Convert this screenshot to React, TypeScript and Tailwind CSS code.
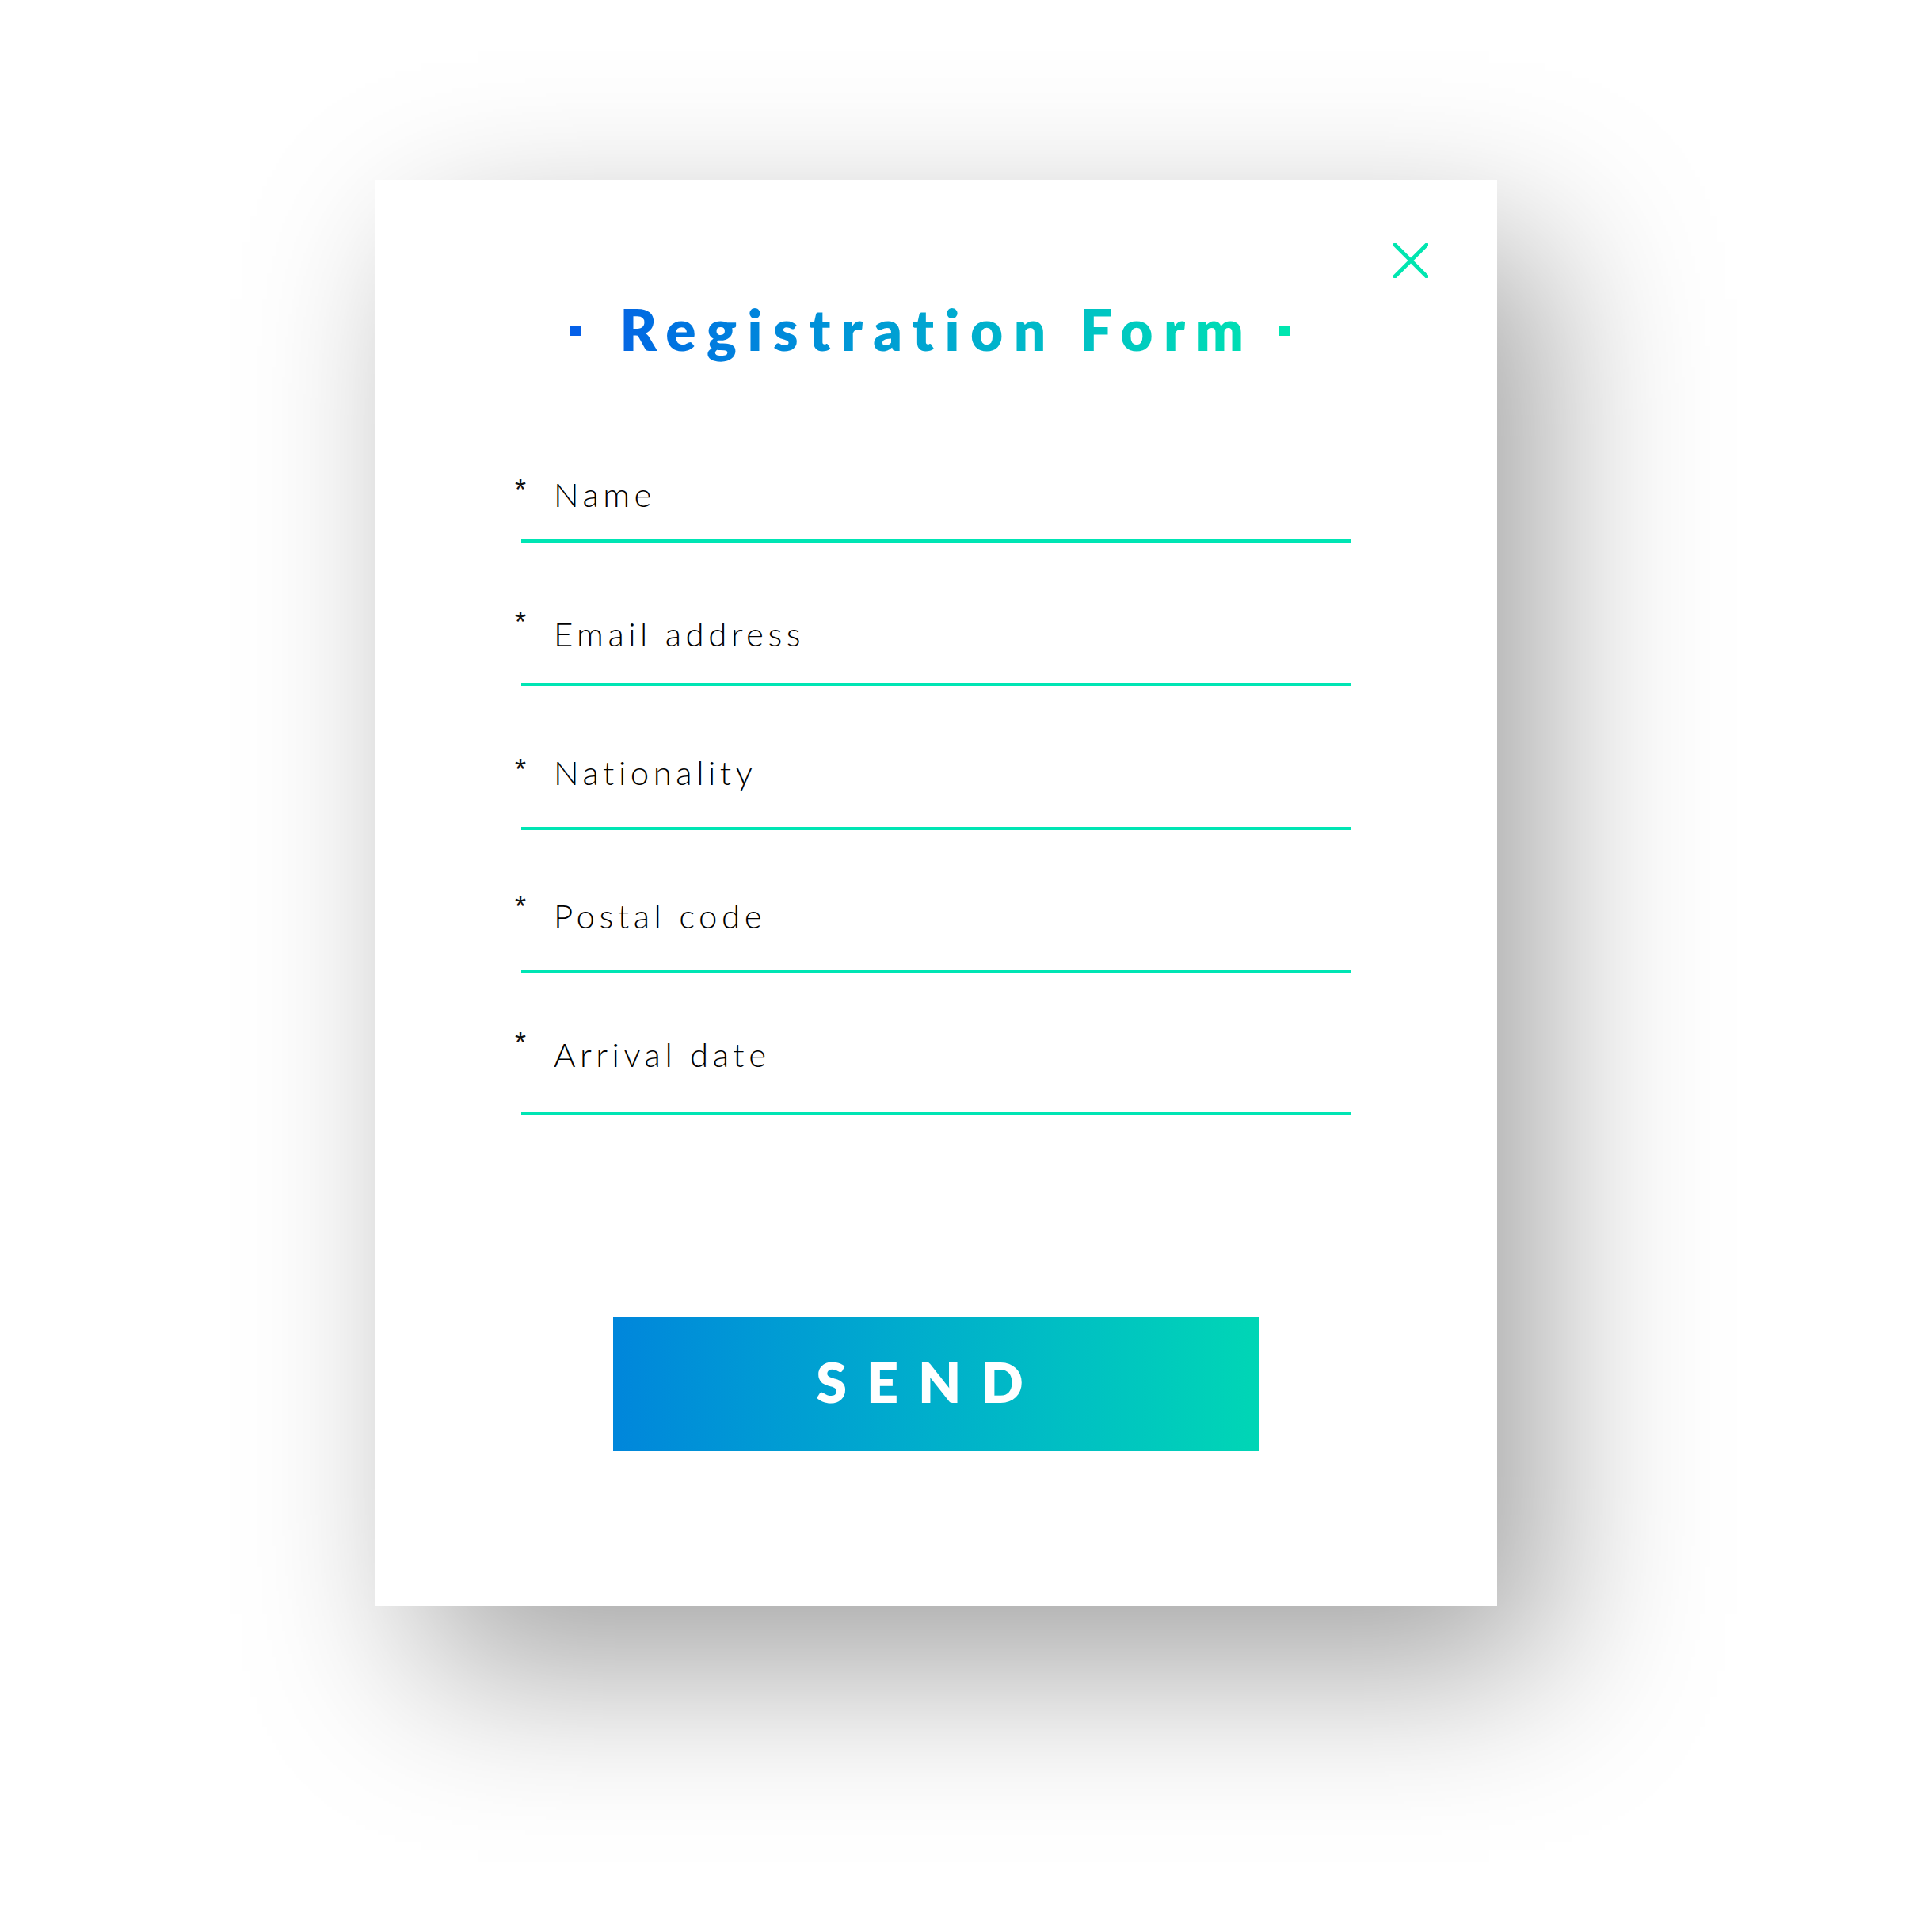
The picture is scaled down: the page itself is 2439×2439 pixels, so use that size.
import React from 'react';

const fields = [
  { label: 'Name', ast: '-mt-[2px]', gap: 'mt-[36px]', top: 'mt-[136px]' },
  { label: 'Email address', ast: '-mt-[11px]', gap: 'mt-[41px]', top: 'mt-[94px]' },
  { label: 'Nationality', ast: 'mt-[0px]', gap: 'mt-[48px]', top: 'mt-[88px]' },
  { label: 'Postal code', ast: '-mt-[8px]', gap: 'mt-[47px]', top: 'mt-[87px]' },
  { label: 'Arrival date', ast: '-mt-[11px]', gap: 'mt-[52px]', top: 'mt-[82px]' },
];

export default function App() {
  return (
    <div className="min-h-[2439px] w-full bg-white pl-[473px] pt-[227px] font-['Lato',sans-serif]">
      <div className="relative flex h-[1801px] w-[1417px] flex-col bg-white shadow-[60px_80px_200px_rgba(0,0,0,0.36)]">
        {/* close */}
        <button className="absolute right-[87px] top-[80px] h-[44px] w-[44px]">
          <svg viewBox="0 0 44 44" className="h-[44px] w-[44px]">
            <path d="M2 2 L42 42 M42 2 L2 42" stroke="#00e6b0" strokeWidth="5" strokeLinecap="square" fill="none" />
          </svg>
        </button>

        {/* title */}
        <div className="flex items-center justify-center pr-[15px] pt-[137px]">
          <span className="mt-[4px] h-[13px] w-[13px] bg-[#0560e8]" />
          <h1 className="ml-[50px] bg-gradient-to-r from-[#0767e3] to-[#00e0b2] bg-clip-text py-[16px] text-[71px] font-extrabold leading-none tracking-[13.5px] text-transparent">
            Registration Form
          </h1>
          <span className="ml-[32px] mt-[4px] h-[13px] w-[13px] bg-[#00e6b0]" />
        </div>

        {/* fields */}
        <div className="flex flex-col px-[185px]">
          {fields.map((f) => (
            <div key={f.label} className={f.top}>
              <div className="flex items-start">
                <span className={`-ml-[8px] w-[49px] font-['Liberation_Sans',sans-serif] text-[36px] leading-none text-[#111] ${f.ast}`}>*</span>
                <span className="text-[42px] font-light leading-none tracking-[5.5px] text-black">{f.label}</span>
              </div>
              <div className={`h-[4px] bg-[#00e5b4] ${f.gap}`} />
            </div>
          ))}
        </div>

        {/* send */}
        <div className="mt-[255px] flex justify-center">
          <button className="flex h-[169px] w-[816px] items-center justify-center bg-gradient-to-r from-[#0086db] to-[#00d6b5] pb-[7px] pr-[16px] text-[70px] font-extrabold leading-none tracking-[25px] text-white">
            SEND
          </button>
        </div>
      </div>
    </div>
  );
}
